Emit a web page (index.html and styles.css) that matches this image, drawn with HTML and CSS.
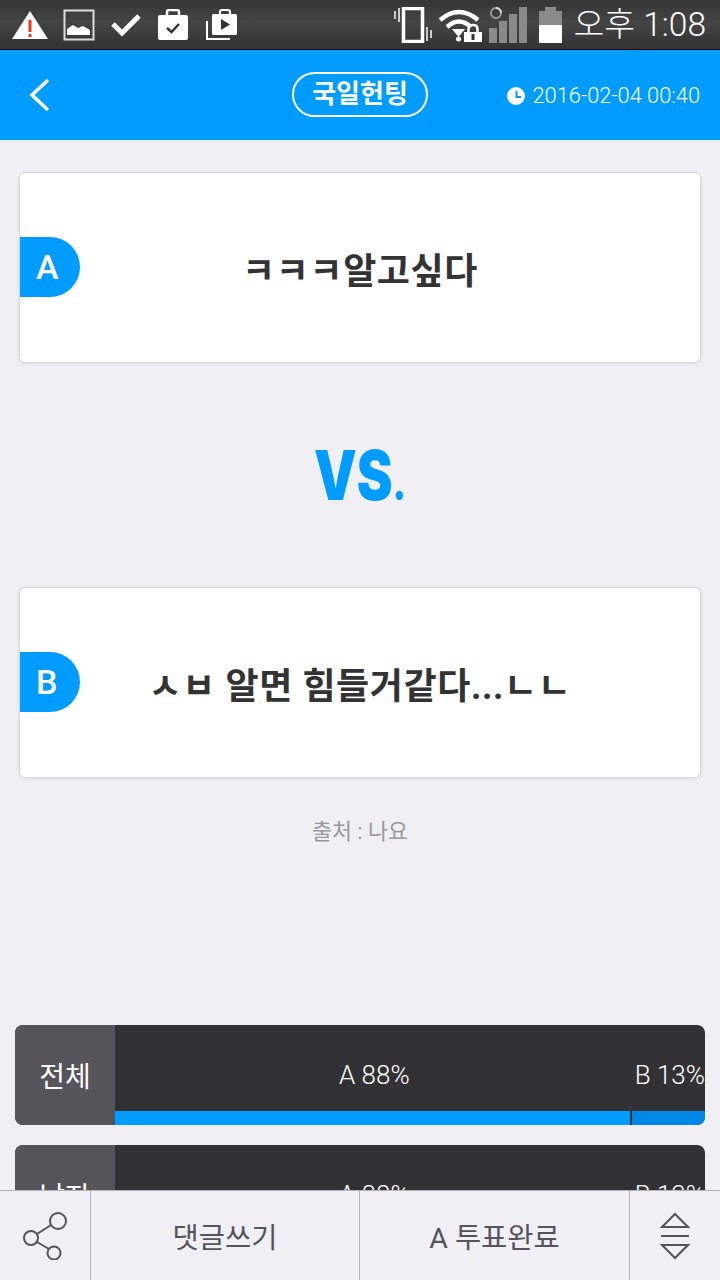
FILE: index.html
```html
<!DOCTYPE html>
<html lang="ko">
<head>
    <meta charset="UTF-8">
    <meta name="viewport" content="width=device-width, initial-scale=1.0">
    <title>국일헌팅</title>
    <link rel="stylesheet" href="styles.css">
</head>
<body>

    <!-- Status bar -->
    <div class="status-bar">
        <div class="status-icons">
            <svg class="ic-warning" width="36" height="30" viewBox="0 0 36 30"><path d="M18 1 L36 29 H0 Z" fill="#fff"/><rect x="16.500" y="10" width="3" height="12" fill="#f0391c"/><rect x="16.500" y="24" width="3" height="3" fill="#f0391c"/></svg>
            <svg width="32" height="32" viewBox="0 0 32 32"><rect x="1.500" y="1.500" width="29" height="29" fill="none" stroke="#ddd" stroke-width="2"/><path d="M4 26 V20 L10 16 L15 19 L20 17 L27 21 V26 Z" fill="#fff"/></svg>
            <svg width="30" height="26" viewBox="0 0 30 26"><path d="M2 12 L11 21 L28 4" fill="none" stroke="#fff" stroke-width="5"/></svg>
            <svg width="32" height="32" viewBox="0 0 32 32"><path d="M10 8 V3 Q10 1 12 1 H20 Q22 1 22 3 V8" fill="none" stroke="#fff" stroke-width="2.500"/><rect x="1" y="6" width="30" height="25" rx="2" fill="#fff"/><path d="M10 19 L14.500 23 L22 15" fill="none" stroke="#333" stroke-width="2.500"/></svg>
            <svg width="32" height="32" viewBox="0 0 32 32"><path d="M2 12 V30 H25" fill="none" stroke="#fff" stroke-width="2"/><path d="M15 6 V3 Q15 1 17 1 H23 Q25 1 25 3 V6" fill="none" stroke="#fff" stroke-width="2"/><rect x="7" y="5" width="25" height="21" rx="1.500" fill="#fff"/><path d="M16 10 L25 15.500 L16 21 Z" fill="#333"/></svg>
        </div>
        <div class="status-right">
            <svg class="ic-vibrate" width="38" height="36" viewBox="0 0 38 36"><rect x="9.500" y="1.500" width="19" height="33" fill="none" stroke="#fff" stroke-width="3.500"/><path d="M1 4 V12 M5 1 V15 M33 20 V34 M37 23 V31" stroke="#ccc" stroke-width="2"/></svg>
            <svg class="ic-wifi" width="43" height="34" viewBox="0 0 43 34"><path d="M1 12 Q20 -4 39 12" fill="none" stroke="#fff" stroke-width="4.500"/><path d="M8 19 Q20 8 32 19" fill="none" stroke="#fff" stroke-width="4.500"/><path d="M13 21 H26 L19.500 29 Z" fill="#fff"/><circle cx="19.500" cy="31" r="2.500" fill="#fff"/><path d="M25 34 V24 H43 V34 Z" fill="#fff"/><path d="M29.500 24 V21 Q29.500 17 34 17 Q38.500 17 38.500 21 V24" fill="none" stroke="#fff" stroke-width="2.500"/><rect x="32.500" y="26" width="3" height="6" fill="#333"/></svg>
            <svg class="ic-signal" width="38" height="36" viewBox="0 0 38 36"><rect x="0" y="21" width="8" height="15" fill="#8a8a8a"/><rect x="10" y="14" width="8" height="22" fill="#8a8a8a"/><rect x="20" y="7" width="8" height="29" fill="#8a8a8a"/><rect x="30" y="0" width="8" height="36" fill="#8a8a8a"/><circle cx="7" cy="6" r="5" fill="#3c3c3c" stroke="#999" stroke-width="2"/><path d="M7 1 A5 5 0 0 1 12 6" fill="none" stroke="#ddd" stroke-width="2"/></svg>
            <div class="battery"><span class="battery-cap"></span><span class="battery-body"><span class="battery-level"></span></span></div>
            <span class="clock">오후 1:08</span>
        </div>
    </div>

    <!-- Header -->
    <div class="header">
        <svg class="back" width="22" height="34" viewBox="0 0 22 34"><path d="M20 2 L4 17 L20 32" fill="none" stroke="#fff" stroke-width="3.500"/></svg>
        <span class="category">국일헌팅</span>
        <span class="date">
            <svg width="18" height="18" viewBox="0 0 18 18"><circle cx="9" cy="9" r="9" fill="#fff"/><path d="M9.500 4 V10 H14" fill="none" stroke="#009cff" stroke-width="2"/></svg>
            2016-02-04 00:40
        </span>
    </div>

    <div class="content">
        <div class="card">
            <span class="badge">A</span>
            <p class="card-text">ㅋㅋㅋ알고싶다</p>
        </div>

        <div class="vs"><span class="vs-text">VS<span class="vs-dot">.</span></span></div>

        <div class="card">
            <span class="badge">B</span>
            <p class="card-text">ㅅㅂ 알면 힘들거같다...ㄴㄴ</p>
        </div>

        <p class="source">출처 : 나요</p>

        <div class="stats">
            <div class="stat-row">
                <div class="stat-label">전체</div>
                <div class="stat-body">
                    <div class="stat-values"><span class="value-a">A 88%</span><span class="value-b">B 13%</span></div>
                    <div class="stat-bar"><span class="bar-a"></span><span class="bar-b"></span></div>
                </div>
            </div>
            <div class="stat-row">
                <div class="stat-label">남자</div>
                <div class="stat-body">
                    <div class="stat-values"><span class="value-a">A 88%</span><span class="value-b">B 13%</span></div>
                    <div class="stat-bar"><span class="bar-a"></span><span class="bar-b"></span></div>
                </div>
            </div>
        </div>
    </div>

    <!-- Bottom toolbar -->
    <div class="toolbar">
        <div class="tool tool-share">
            <svg width="46" height="48" viewBox="0 0 46 48"><g fill="none" stroke="#55545b" stroke-width="2"><circle cx="36" cy="9" r="8"/><circle cx="9" cy="26" r="7"/><circle cx="32" cy="41" r="6.500"/><path d="M15 22 L29 13 M15 30 L27 37"/></g></svg>
        </div>
        <div class="tool tool-wide">댓글쓰기</div>
        <div class="tool tool-wide">A 투표완료</div>
        <div class="tool tool-sort">
            <svg width="30" height="48" viewBox="0 0 30 48"><g fill="none" stroke="#55545b" stroke-width="2"><path d="M2 15 L15 2 L28 15 Z"/><path d="M1 24 H29" /><path d="M2 33 L15 46 L28 33 Z"/></g></svg>
        </div>
    </div>

</body>
</html>
```

FILE: styles.css
```css
* {
    box-sizing: border-box;
}

html,
body {
    margin: 0;
    padding: 0;
    height: 1280px;
    overflow: hidden;
}

body {
    position: relative;
    font-family: 'Roboto', 'Noto Sans CJK KR', sans-serif;
    background: #efeff4;
    color: #333;
}

/* Status bar */
.status-bar {
    display: flex;
    justify-content: space-between;
    align-items: center;
    height: 50px;
    padding: 0 14px 0 12px;
    background: linear-gradient(#363636, #444 45%, #333);
    border-bottom: 1px solid #000;
}

.status-icons {
    display: flex;
    align-items: center;
    gap: 16px;
}

.ic-warning {
    margin-right: -1px;
}

.status-right {
    display: flex;
    align-items: center;
}

.ic-vibrate {
    margin-right: 7px;
}

.ic-wifi {
    margin-right: 7px;
}

.ic-signal {
    margin-right: 12px;
}

.battery {
    display: flex;
    flex-direction: column;
    align-items: center;
    width: 23px;
    margin-right: 11px;
}

.battery-cap {
    width: 11px;
    height: 4px;
    background: #8a8a8a;
}

.battery-body {
    display: flex;
    align-items: flex-end;
    width: 23px;
    height: 32px;
    background: #8a8a8a;
}

.battery-level {
    width: 100%;
    height: 18px;
    background: #fff;
}

.clock {
    font-size: 33.5px;
    font-weight: 300;
    color: #fff;
    line-height: 1;
}

/* Header */
.header {
    position: relative;
    display: flex;
    justify-content: center;
    align-items: center;
    height: 90px;
    background: #009cff;
    color: #fff;
}

.back {
    position: absolute;
    left: 28px;
    top: 28px;
}

.category {
    display: block;
    padding: 0 18px;
    height: 45px;
    line-height: 41px;
    border: 2px solid #fff;
    border-radius: 23px;
    font-size: 26px;
    font-weight: 700;
    margin-top: -1px;
}

.date {
    position: absolute;
    right: 20px;
    top: 31px;
    display: flex;
    align-items: center;
    gap: 8px;
    font-size: 21.8px;
    font-weight: 300;
    line-height: 30px;
}

/* Question cards */
.content {
    padding-top: 32px;
}

.card {
    position: relative;
    display: flex;
    justify-content: center;
    align-items: center;
    height: 191px;
    margin: 0 19px;
    background: #fff;
    border: 1px solid #d6d6da;
    border-radius: 6px;
    box-shadow: 0 1px 5px rgba(0, 0, 0, 0.08);
}

.badge {
    position: absolute;
    left: 0;
    top: 64px;
    width: 60px;
    height: 60px;
    padding-left: 16px;
    background: #009cff;
    border-radius: 0 30px 30px 0;
    color: #fff;
    font-size: 34px;
    font-weight: 500;
    line-height: 60px;
}

.card-text {
    margin: 0;
    font-size: 36px;
    font-weight: 700;
    letter-spacing: 0.6px;
    color: #333;
}

.vs {
    height: 224px;
    text-align: center;
    font-family: 'Inter', sans-serif;
    font-size: 69px;
    font-weight: 900;
    line-height: 224px;
    color: #009cff;
}

.vs-text {
    display: inline-block;
    transform: scaleX(0.78);
}

.vs-dot {
    font-size: 46px;
}

.source {
    margin: 39px 0 0;
    height: 31px;
    text-align: center;
    font-size: 21.7px;
    line-height: 30px;
    color: #98989e;
}

/* Vote stats */
.stats {
    display: flex;
    flex-direction: column;
    gap: 20px;
    margin: 177px 15px 0;
}

.stat-row {
    display: flex;
    height: 100px;
    border-radius: 8px;
    overflow: hidden;
    background: #323234;
}

.stat-label {
    width: 100px;
    background: #55545b;
    color: #fff;
    text-align: center;
    font-size: 28px;
    line-height: 106px;
}

.stat-body {
    display: flex;
    flex-direction: column;
    flex: 1;
}

.stat-values {
    position: relative;
    flex: 1;
    color: #fff;
    font-size: 26px;
    font-weight: 300;
    line-height: 101px;
}

.value-a {
    position: absolute;
    left: 224px;
}

.value-b {
    position: absolute;
    right: 0;
}

.stat-bar {
    display: flex;
    height: 14px;
}

.bar-a {
    width: 517px;
    background: #009cff;
    border-right: 2px solid #323234;
}

.bar-b {
    flex: 1;
    background: #0088e8;
}

/* Bottom toolbar stays on top of the list */
.toolbar {
    position: absolute;
    left: 0;
    right: 0;
    bottom: 0;
    display: flex;
    height: 90px;
    background: #efeff4;
    border-top: 1px solid #b4b3bb;
}

.tool {
    display: flex;
    justify-content: center;
    align-items: center;
    color: #55545b;
    font-size: 28.5px;
    border-right: 1px solid #b4b3bb;
}

.tool-share {
    width: 91px;
}

.tool-wide {
    width: 269px;
}

.tool-wide:nth-child(3) {
    width: 270px;
}

.tool-sort {
    flex: 1;
    border-right: none;
}
```
